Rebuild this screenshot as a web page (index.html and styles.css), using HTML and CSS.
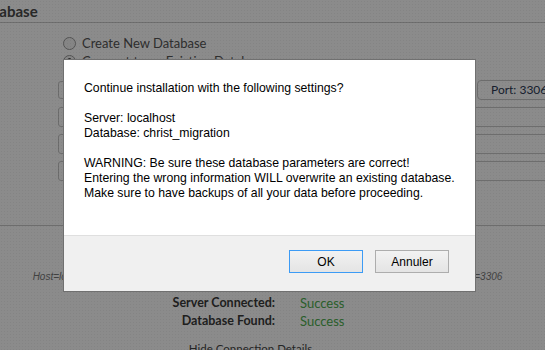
FILE: index.html
```html
<!DOCTYPE html>
<html lang="en">
<head>
  <meta charset="UTF-8">
  <meta name="viewport" content="width=device-width, initial-scale=1.0">
  <title>Database Setup</title>
  <link rel="stylesheet" href="styles.css">
</head>
<body>
  <div class="page">
    <h2 class="section-title">Database</h2>

    <div class="db-options">
      <label class="radio-row"><span class="radio"></span>Create New Database</label>
      <label class="radio-row"><span class="radio checked"></span>Connect to an Existing Database</label>
    </div>

    <div class="fields">
      <div class="field-row">
        <div class="field">localhost</div>
        <div class="port">Port: 3306</div>
      </div>
      <div class="field">christ_migration</div>
      <div class="field">root</div>
      <div class="field">••••••••</div>
    </div>

    <hr class="divider">

    <div class="results">
      <p class="conn-string">Host=localhost; Database=christ_migration; Username=root; Password=********; Pooling=false; Port=3306</p>
      <div class="checks">
        <span class="check-label">Server Connected:</span>
        <span class="check-value">Success</span>
        <span class="check-label">Database Found:</span>
        <span class="check-value">Success</span>
      </div>
      <a class="toggle-details">Hide Connection Details</a>
    </div>
  </div>

  <!-- confirm dialog -->
  <div class="overlay"></div>
  <div class="dialog">
    <div class="dialog-body">
      <p>Continue installation with the following settings?</p>
      <p>Server: localhost<br>Database: christ_migration</p>
      <p>WARNING: Be sure these database parameters are correct!<br>
        Entering the wrong information WILL overwrite an existing database.<br>
        Make sure to have backups of all your data before proceeding.</p>
    </div>
    <div class="dialog-footer">
      <button class="btn btn-default">OK</button>
      <button class="btn">Annuler</button>
    </div>
  </div>
</body>
</html>
```

FILE: styles.css
```css
body {
  margin: 0;
  width: 545px;
  height: 350px;
  overflow: hidden;
  background: #fff;
  font-family: Lato, "Liberation Sans", Arial, sans-serif;
  color: #555;
  position: relative;
}

.page {
  width: 545px;
}

.section-title {
  margin: 0 0 0 -25px;
  width: 600px;
  height: 22px;
  line-height: 22px;
  font-size: 15px;
  font-weight: bold;
  color: #4a4a4a;
  border-bottom: 1px solid #ccc;
}

.db-options {
  margin-top: 11px;
  padding-left: 63px;
}

.radio-row {
  display: flex;
  align-items: center;
  height: 18px;
  font-size: 13px;
  color: #555;
}

.radio {
  width: 11px;
  height: 11px;
  border: 1px solid #9a9a9a;
  border-radius: 50%;
  background: #f4f4f4;
  margin-right: 6px;
}

.radio.checked {
  background: radial-gradient(circle, #555 0 3px, #f4f4f4 3.5px);
}

.fields {
  margin-top: 10px;
  padding-left: 58px;
}

.field-row {
  display: flex;
  align-items: center;
  gap: 8px;
  margin-bottom: 7px;
}

.field-row .field {
  flex: 1;
  margin-bottom: 0;
  height: 18px;
}

.field {
  box-sizing: border-box;
  height: 20px;
  margin-bottom: 7px;
  width: 520px;
  padding-left: 4px;
  border: 1px solid #c8c8c8;
  border-radius: 3px;
  font-size: 12px;
  line-height: 18px;
  color: #7a1f2a;
}

.port {
  box-sizing: border-box;
  flex: none;
  width: 82px;
  height: 20px;
  margin-right: -14px;
  padding-left: 13px;
  border: 1px solid #c6c6c6;
  border-radius: 4px;
  font-size: 12px;
  line-height: 18px;
  color: #2c3a55;
  white-space: nowrap;
}

.divider {
  margin: 44px 0 0;
  border: none;
  border-top: 1px solid #c8c8c8;
}

.results {
  padding-top: 44px;
}

.conn-string {
  margin: 0;
  text-align: center;
  font-family: "Liberation Sans", Arial, sans-serif;
  font-style: italic;
  font-size: 10px;
  line-height: 14px;
  color: #7a7a7a;
  white-space: nowrap;
  padding-right: 10px;
}

.checks {
  display: grid;
  grid-template-columns: 275px 1fr;
  column-gap: 25px;
  margin-top: 10px;
}

.check-label {
  text-align: right;
  font-weight: bold;
  font-size: 12.5px;
  line-height: 18px;
  color: #3a3a3a;
}

.check-value {
  font-size: 13px;
  line-height: 18px;
  color: #4fb04f;
}

.toggle-details {
  display: block;
  margin-top: 12px;
  padding-right: 44px;
  text-align: center;
  font-size: 11.5px;
  line-height: 14px;
  color: #444;
}

.overlay {
  position: absolute;
  top: 0;
  left: 0;
  right: 0;
  bottom: 0;
  background-color: rgba(0, 0, 0, 0.455);
  background-image: radial-gradient(rgba(0, 0, 0, 0.05) 0.7px, transparent 0.8px);
  background-size: 3px 3px;
}

.dialog {
  position: absolute;
  left: 63px;
  top: 59px;
  width: 413px;
  height: 233px;
  box-sizing: border-box;
  border: 1px solid #707070;
  background: #fff;
  font-family: "Liberation Sans", Arial, sans-serif;
  font-size: 12.25px;
  line-height: 15px;
  color: #000;
  display: flex;
  flex-direction: column;
}

.dialog-body {
  flex: 1;
  padding: 21px 10px 0 20px;
  white-space: nowrap;
}

.dialog-body p {
  margin: 0 0 15px;
}

.dialog-footer {
  height: 56px;
  box-sizing: border-box;
  display: flex;
  justify-content: flex-end;
  align-items: flex-start;
  gap: 12px;
  padding: 14px 26px 0 0;
  background: #f0f0f0;
  border-top: 1px solid #dfdfdf;
}

.btn {
  box-sizing: border-box;
  width: 74px;
  height: 23px;
  padding: 0;
  border: 1px solid #adadad;
  background: linear-gradient(#f2f2f2, #e4e4e4);
  font-family: "Liberation Sans", Arial, sans-serif;
  font-size: 12px;
  color: #000;
}

.btn-default {
  border-color: #3c9bf5;
}
```
